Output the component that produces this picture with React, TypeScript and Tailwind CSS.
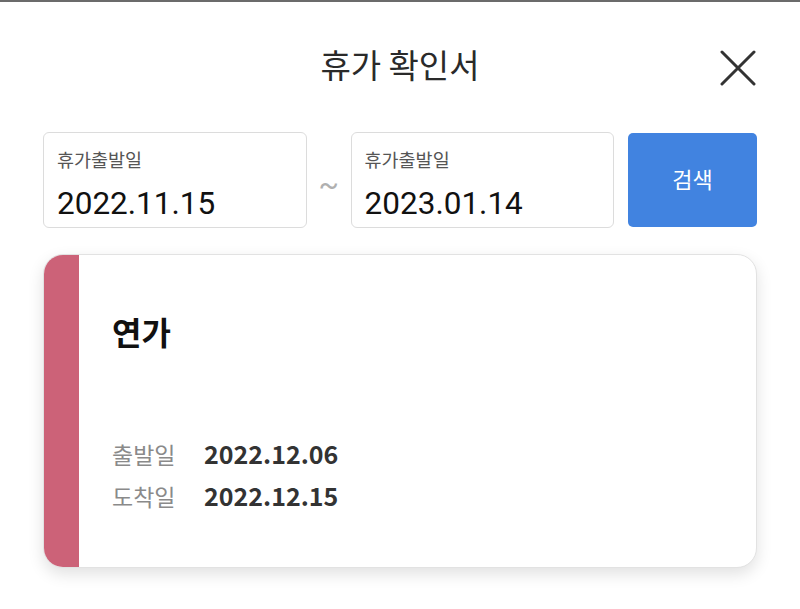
const kr = "font-['Roboto','Noto_Sans_CJK_KR',sans-serif]";
const cjk = "font-['Noto_Sans_CJK_KR',sans-serif]";

function DateBox({ label, value }: { label: string; value: string }) {
  return (
    <div className="flex h-[96px] w-[264px] flex-col rounded-md border border-[#dcdcdc] bg-white pl-[13px] pt-[15px]">
      <span className="text-[18.5px] leading-[26px] text-[#555]">{label}</span>
      <span className="mt-[12px] text-[31.5px] leading-[36px] text-[#111]">{value}</span>
    </div>
  );
}

function InfoRow({ label, value }: { label: string; value: string }) {
  return (
    <div className="flex h-[42px] items-center">
      <span className="w-[92px] text-[23px] text-[#8a8a8a]">{label}</span>
      <span className="text-[25px] font-bold text-[#333]">{value}</span>
    </div>
  );
}

function App() {
  return (
    <div className={`h-[609px] w-[800px] border-t-2 border-[#6b6b6b] bg-white ${kr}`}>
      <div className="relative flex h-[130px] items-center justify-center pb-[4px]">
        <h1 className={`text-[33px] text-[#2a2a2a] ${cjk}`}>휴가 확인서</h1>
        <button className="absolute right-[44px] top-[48px] text-[#333]">
          <svg width="36" height="36" viewBox="0 0 36 36" fill="none" stroke="currentColor" strokeWidth="3" strokeLinecap="round">
            <path d="M2 2L34 34M34 2L2 34" />
          </svg>
        </button>
      </div>

      <div className="flex items-center px-[43px]">
        <DateBox label="휴가출발일" value="2022.11.15" />
        <div className="flex w-[44px] justify-center pt-[8px] text-[30px] text-[#b0b0b0]">~</div>
        <DateBox label="휴가출발일" value="2023.01.14" />
        <button className="ml-[14px] h-[94px] w-[129px] rounded-[5px] bg-[#4183e0] text-[22px] text-white">
          검색
        </button>
      </div>

      <div className="mx-[43px] mt-[26px] flex h-[314px] overflow-hidden rounded-[20px] border border-[#e2e2e2] bg-white shadow-[0_6px_16px_rgba(0,0,0,0.12)]">
        <div className="w-[35px] bg-[#cc6278]" />
        <div className={`flex flex-1 flex-col pl-[33px] pt-[54px] ${cjk}`}>
          <span className="text-[32px] font-bold leading-[44px] text-[#111]">연가</span>
          <div className="mt-[80px] flex flex-col">
            <InfoRow label="출발일" value="2022.12.06" />
            <InfoRow label="도착일" value="2022.12.15" />
          </div>
        </div>
      </div>
    </div>
  );
}

export default App;
